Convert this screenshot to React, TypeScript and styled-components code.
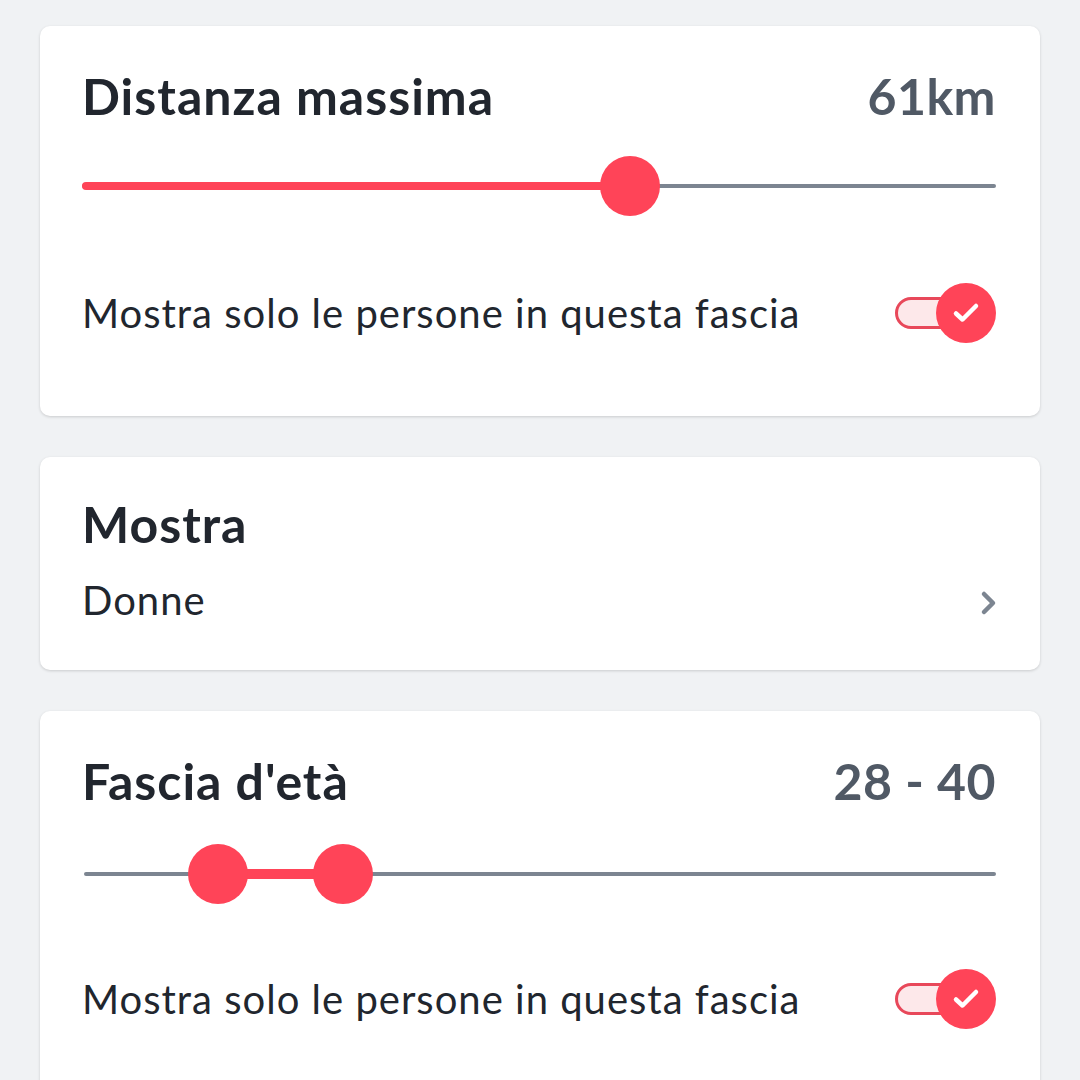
import { useState } from "react";
import styled, { createGlobalStyle } from "styled-components";

const GlobalStyle = createGlobalStyle`
  html, body {
    margin: 0;
    padding: 0;
    background: #f0f2f4;
    font-family: Lato, "Noto Sans", sans-serif;
    color: #21262e;
    overflow: hidden;
  }
`;

const RED = "#ff4458";
const GRAY = "#7c8591";
const THUMB = 60;

function Check() {
  return (
    <svg width="30" height="26" viewBox="0 0 30 26" fill="none">
      <path
        d="M5 13.5 L11.5 19.5 L25 6"
        stroke="white"
        strokeWidth="4.5"
        strokeLinecap="round"
        strokeLinejoin="round"
      />
    </svg>
  );
}

function Chevron() {
  return (
    <ChevronIcon width="20" height="28" viewBox="0 0 20 28" fill="none">
      <path
        d="M5 5 L14 14 L5 23"
        stroke={GRAY}
        strokeWidth="4.5"
        strokeLinecap="round"
        strokeLinejoin="round"
      />
    </ChevronIcon>
  );
}

function Toggle({ on }: { on: boolean }) {
  return (
    <ToggleBox>
      <ToggleTrack />
      {on && (
        <ToggleThumb>
          <Check />
        </ToggleThumb>
      )}
    </ToggleBox>
  );
}

// thumb centres travel from THUMB/2 to width - THUMB/2
function Slider({ from, to, min, max }: { from?: number; to: number; min: number; max: number }) {
  const pos = (v: number) => {
    const f = (v - min) / (max - min);
    return `calc(${THUMB / 2}px + (100% - ${THUMB}px) * ${f})`;
  };
  const start = from === undefined ? "0px" : pos(from);
  const end = pos(to);
  return (
    <SliderBox>
      <Rail />
      <Fill $range={from !== undefined} style={{ left: start, width: `calc(${end} - ${start})` }} />
      {from !== undefined && <Thumb style={{ left: start }} />}
      <Thumb style={{ left: end }} />
    </SliderBox>
  );
}

export default function App() {
  const [onlyDistance] = useState(true);
  const [onlyAge] = useState(true);

  return (
    <>
      <GlobalStyle />
      <Page>
        <Card>
          <HeaderRow>
            <Title>Distanza massima</Title>
            <Value>61km</Value>
          </HeaderRow>
          <SliderWrap>
            <Slider to={61} min={1} max={100} />
          </SliderWrap>
          <OptionRow>
            <Body>Mostra solo le persone in questa fascia</Body>
            <Toggle on={onlyDistance} />
          </OptionRow>
        </Card>

        <ShortCard>
          <Title>Mostra</Title>
          <LinkRow>
            <Body>Donne</Body>
            <Chevron />
          </LinkRow>
        </ShortCard>

        <Card>
          <HeaderRow>
            <Title>Fascia d'età</Title>
            <Value>28 - 40</Value>
          </HeaderRow>
          <SliderWrap $age>
            <Slider from={28} to={40} min={18} max={100} />
          </SliderWrap>
          <OptionRow>
            <Body>Mostra solo le persone in questa fascia</Body>
            <Toggle on={onlyAge} />
          </OptionRow>
        </Card>
      </Page>
    </>
  );
}

const Page = styled.div`
  display: flex;
  flex-direction: column;
  gap: 41px;
  padding: 26px 40px;
`;

const Card = styled.div`
  background: white;
  border-radius: 10px;
  box-shadow: 0 1px 3px rgba(0, 0, 0, 0.16);
  padding: 40px 44px 73px 42px;
  display: flex;
  flex-direction: column;
`;

const ShortCard = styled(Card)`
  padding: 37px 44px 46px 42px;
  gap: 22px;
`;

const HeaderRow = styled.div`
  display: flex;
  justify-content: space-between;
  align-items: center;
`;

const Title = styled.div`
  font-size: 50px;
  line-height: 60px;
  font-weight: 700;
  letter-spacing: 1px;
  color: #21262e;
`;

const Value = styled.div`
  font-size: 50px;
  line-height: 60px;
  font-weight: 700;
  letter-spacing: 0.5px;
  color: #505965;
`;

const Body = styled.div`
  font-size: 40px;
  line-height: 48px;
  letter-spacing: 1px;
  color: #21262e;
`;

const ChevronIcon = styled.svg`
  margin: 6px -3px 0 0;
`;

const SliderWrap = styled.div<{ $age?: boolean }>`
  margin: ${(p) => (p.$age ? "33px 0 65px 2px" : "30px 0 67px 0")};
`;

const SliderBox = styled.div`
  position: relative;
  height: ${THUMB}px;
`;

const Rail = styled.div`
  position: absolute;
  left: 0;
  right: 0;
  top: 28px;
  height: 4px;
  border-radius: 2px;
  background: ${GRAY};
`;

const Fill = styled.div<{ $range: boolean }>`
  position: absolute;
  top: ${(p) => (p.$range ? "25px" : "26px")};
  height: ${(p) => (p.$range ? "10px" : "8px")};
  border-radius: 4px;
  background: ${RED};
`;

const Thumb = styled.div`
  position: absolute;
  top: 0;
  width: ${THUMB}px;
  height: ${THUMB}px;
  margin-left: -${THUMB / 2}px;
  border-radius: 50%;
  background: ${RED};
`;

const OptionRow = styled.div`
  display: flex;
  justify-content: space-between;
  align-items: center;
`;

const LinkRow = styled.div`
  display: flex;
  justify-content: space-between;
  align-items: center;
`;

const ToggleBox = styled.div`
  position: relative;
  width: 101px;
  height: 60px;
  flex-shrink: 0;
`;

const ToggleTrack = styled.div`
  position: absolute;
  left: 0;
  top: 14px;
  width: 80px;
  height: 32px;
  box-sizing: border-box;
  border: 3px solid #e8485a;
  border-radius: 16px;
  background: #fde8ea;
`;

const ToggleThumb = styled.div`
  position: absolute;
  right: 0;
  top: 0;
  width: 60px;
  height: 60px;
  border-radius: 50%;
  background: ${RED};
  display: flex;
  align-items: center;
  justify-content: center;
`;
